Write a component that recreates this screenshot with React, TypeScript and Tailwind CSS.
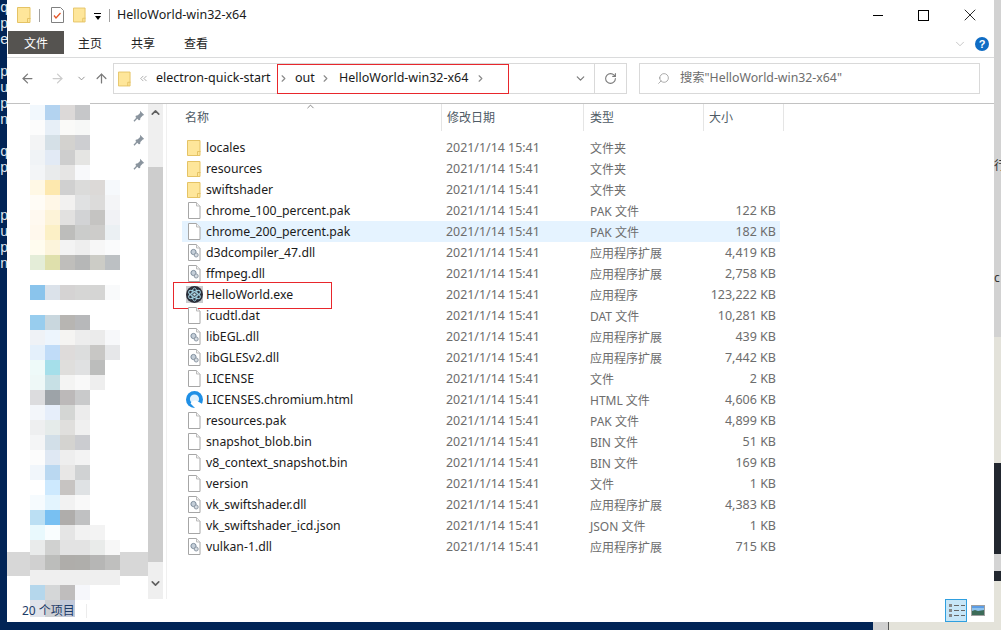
import { ArrowLeft, ArrowRight, ArrowUp, ChevronDown, ChevronRight, ChevronUp, ChevronsLeft, RotateCw, Search, X } from 'lucide-react';

const font = "font-['Noto_Sans','Noto_Sans_CJK_SC',sans-serif]";

type FileRow = { name: string; type: string; size?: string; icon: 'folder' | 'file' | 'dll' | 'exe' | 'html'; hover?: boolean };

const files: FileRow[] = [
  { name: 'locales', type: '文件夹', icon: 'folder' },
  { name: 'resources', type: '文件夹', icon: 'folder' },
  { name: 'swiftshader', type: '文件夹', icon: 'folder' },
  { name: 'chrome_100_percent.pak', type: 'PAK 文件', size: '122 KB', icon: 'file' },
  { name: 'chrome_200_percent.pak', type: 'PAK 文件', size: '182 KB', icon: 'file', hover: true },
  { name: 'd3dcompiler_47.dll', type: '应用程序扩展', size: '4,419 KB', icon: 'dll' },
  { name: 'ffmpeg.dll', type: '应用程序扩展', size: '2,758 KB', icon: 'dll' },
  { name: 'HelloWorld.exe', type: '应用程序', size: '123,222 KB', icon: 'exe' },
  { name: 'icudtl.dat', type: 'DAT 文件', size: '10,281 KB', icon: 'file' },
  { name: 'libEGL.dll', type: '应用程序扩展', size: '439 KB', icon: 'dll' },
  { name: 'libGLESv2.dll', type: '应用程序扩展', size: '7,442 KB', icon: 'dll' },
  { name: 'LICENSE', type: '文件', size: '2 KB', icon: 'file' },
  { name: 'LICENSES.chromium.html', type: 'HTML 文件', size: '4,606 KB', icon: 'html' },
  { name: 'resources.pak', type: 'PAK 文件', size: '4,899 KB', icon: 'file' },
  { name: 'snapshot_blob.bin', type: 'BIN 文件', size: '51 KB', icon: 'file' },
  { name: 'v8_context_snapshot.bin', type: 'BIN 文件', size: '169 KB', icon: 'file' },
  { name: 'version', type: '文件', size: '1 KB', icon: 'file' },
  { name: 'vk_swiftshader.dll', type: '应用程序扩展', size: '4,383 KB', icon: 'dll' },
  { name: 'vk_swiftshader_icd.json', type: 'JSON 文件', size: '1 KB', icon: 'file' },
  { name: 'vulkan-1.dll', type: '应用程序扩展', size: '715 KB', icon: 'dll' },
];

// blurred-out quick access entries, one row of blocks per line
const blurRows: { cls: string; cells: string[] }[] = [
  { cls: 'h-[15px]', cells: ['bg-[#f2f8fd]', 'bg-[#b3d3f0]', 'bg-[#dcd9d8]', 'bg-[#c6c7c9]'] },
  { cls: 'h-[15px]', cells: ['bg-[#fcfcfc]', 'bg-[#e7eff7]', 'bg-[#fafaf8]', 'bg-[#f7f8f7]'] },
  { cls: 'h-[15px]', cells: ['bg-[#f3f4f5]', 'bg-[#d5e0e7]', 'bg-[#d3d2cf]', 'bg-[#cdced1]'] },
  { cls: 'h-[15px]', cells: ['bg-[#f0f3f6]', 'bg-[#e2eaf5]', 'bg-[#cecece]', 'bg-[#e5e5e3]'] },
  { cls: 'h-[15px]', cells: ['bg-[#f3f5f7]', 'bg-[#e9ebec]', 'bg-[#e6e5e4]', 'bg-[#f8f9fb]'] },
  { cls: 'h-[15px]', cells: ['bg-[#fff8e5]', 'bg-[#fde8ae]', 'bg-[#d0d0d0]', 'bg-[#dbdbda]', 'bg-[#dcd9d7]', 'bg-[#f6f9fc]'] },
  { cls: 'h-[15px]', cells: ['bg-[#fffcf6]', 'bg-[#fff7e7]', 'bg-[#f2f1f0]', 'bg-[#e0e1e2]', 'bg-[#dcdbda]', 'bg-[#f4f5f7]'] },
  { cls: 'h-[15px]', cells: ['bg-[#fff9f0]', 'bg-[#fdf3d8]', 'bg-[#e2e1e0]', 'bg-[#d2d3d5]', 'bg-[#c5c4c2]', 'bg-[#f1f2f5]'] },
  { cls: 'h-[15px]', cells: ['bg-[#fff8ed]', 'bg-[#fcf0c6]', 'bg-[#bdbdbb]', 'bg-[#cbcccb]', 'bg-[#cdccca]', 'bg-[#ebf0f3]'] },
  { cls: 'h-[15px]', cells: ['bg-[#fffcef]', 'bg-[#fcf4db]', 'bg-[#f3f3f3]', 'bg-[#eeeeee]', 'bg-[#f7f7f7]', 'bg-[#fafbfc]'] },
  { cls: 'h-[15px]', cells: ['bg-[#e4edd8]', 'bg-[#dfe0ac]', 'bg-[#bfbebb]', 'bg-[#b6b7b7]', 'bg-[#ccccc6]', 'bg-[#bcc0c3]'] },
  { cls: 'h-[15px]', cells: [] },
  { cls: 'h-[15px]', cells: ['bg-[#8ac4ec]', 'bg-[#dbe2ea]', 'bg-[#d5d3d3]', 'bg-[#d6d6d5]', 'bg-[#d5d5d4]', 'bg-[#f9fafb]'] },
  { cls: 'h-[15px]', cells: [] },
  { cls: 'h-[15px]', cells: ['bg-[#98cdee]', 'bg-[#c9d7de]', 'bg-[#b7b5b2]', 'bg-[#b7b8ba]'] },
  { cls: 'h-[15px]', cells: ['bg-[#eff2f6]', 'bg-[#edf5fd]', 'bg-[#f5f4f2]', 'bg-[#ededed]', 'bg-[#ebebeb]', 'bg-[#f7f8fa]'] },
  { cls: 'h-[15px]', cells: ['bg-[#e4f0fb]', 'bg-[#c0dcf8]', 'bg-[#dedbda]', 'bg-[#dcdddd]', 'bg-[#c8c7c5]', 'bg-[#e6e7e9]'] },
  { cls: 'h-[15px]', cells: ['bg-[#eefaf9]', 'bg-[#a5dfea]', 'bg-[#dfdedc]', 'bg-[#e0e1e2]', 'bg-[#bcbdbc]'] },
  { cls: 'h-[15px]', cells: ['bg-[#eef8f7]', 'bg-[#c7e0e5]', 'bg-[#f4f4f3]', 'bg-[#f9f9f9]', 'bg-[#eeeeee]'] },
  { cls: 'h-[15px]', cells: ['bg-[#dcdcde]', 'bg-[#9da3a8]', 'bg-[#bcb9b9]', 'bg-[#c9cacb]'] },
  { cls: 'h-[15px]', cells: ['bg-[#f3f6fa]', 'bg-[#e6eefa]', 'bg-[#d4d6d4]', 'bg-[#ececec]'] },
  { cls: 'h-[15px]', cells: ['bg-[#eeeff0]', 'bg-[#e5ebea]', 'bg-[#e0dfdd]', 'bg-[#f0f0f0]'] },
  { cls: 'h-[15px]', cells: ['bg-[#f4f5f6]', 'bg-[#d2dfe8]', 'bg-[#d4d3d0]', 'bg-[#cbccd0]'] },
  { cls: 'h-[15px]', cells: ['bg-[#fcfcfc]', 'bg-[#dfe8f3]', 'bg-[#eeeeee]', 'bg-[#f3f3f3]'] },
  { cls: 'h-[15px]', cells: ['bg-[#f1f6fb]', 'bg-[#bad8f1]', 'bg-[#e8e7e6]', 'bg-[#d0d2d3]'] },
  { cls: 'h-[15px]', cells: ['bg-[#ffffff]', 'bg-[#cde9fe]', 'bg-[#c7c4c2]', 'bg-[#dfe2e4]'] },
  { cls: 'h-[15px]', cells: ['bg-[#f6fbfe]', 'bg-[#e3f4fe]', 'bg-[#f2f2f2]', 'bg-[#f9f9f9]'] },
  { cls: 'h-[15px]', cells: ['bg-[#bbdff3]', 'bg-[#78c0f2]', 'bg-[#afadab]', 'bg-[#c0c1c2]'] },
  { cls: 'h-[15px]', cells: ['bg-[#e9f9fd]', 'bg-[#f9fdfe]', 'bg-[#e5e5e5]', 'bg-[#f2f2f2]', 'bg-[#f3f3f3]'] },
  { cls: 'h-[12px]', cells: ['bg-[#e9ebeb]', 'bg-[#d0d1d0]', 'bg-[#e3e3e3]', 'bg-[#e3e3e3]', 'bg-[#e9ebea]', 'bg-[#f7f7f7]'] },
];

const tailRows: { cls: string; cells: string[] }[] = [
  { cls: 'h-[9px]', cells: ['bg-[#efefef]', 'bg-[#efefef]', 'bg-[#efefef]', 'bg-[#efefef]', 'bg-[#efefef]', 'bg-[#efefef]'] },
  { cls: 'h-[15px]', cells: ['bg-[#b5d7ec]', 'bg-[#d5d7d8]', 'bg-[#bfbdbd]', 'bg-[#f6f7fb]'] },
  { cls: 'h-[17px]', cells: ['bg-[#e0e3ea]', 'bg-[#cdd0d3]', 'bg-[#c2c9d9]'] },
];

const termLines = ['q', 'p', 'e', '', 'p', 'u', 'p', 'n', '', 'q', 'p', '', '', 'p', 'u', 'p', 'n'];

function Folder({ cls = 'w-[14px] h-[16px]' }: { cls?: string }) {
  return (
    <svg viewBox="0 0 14 16" className={cls}>
      <path d="M.5.5h12.5v15H.5z" fill="#fee69a" stroke="#e5c365" />
      <path d="M10.5 15.5v-4h3" fill="none" stroke="#e5c365" />
    </svg>
  );
}

function FileIcon({ gear }: { gear?: boolean }) {
  return (
    <svg viewBox="0 0 14 17" className="w-[14px] h-[17px]">
      <path d="M1.5.5h8l3.5 3.5v12.5H1.5z" fill="#fff" stroke="#a6a6a6" />
      <path d="M9.5.5v3.5H13" fill="#f3f3f3" stroke="#bcbcbc" />
      {gear && (
        <g>
          <circle cx="6.5" cy="8" r="2.6" fill="#c4ced8" stroke="#7e8d9c" strokeWidth="1" />
          <circle cx="9.2" cy="11" r="2" fill="#d5dbe1" stroke="#8f9aa6" strokeWidth="1" />
        </g>
      )}
    </svg>
  );
}

function ElectronIcon() {
  return (
    <svg viewBox="0 0 17 17" className="w-[17px] h-[17px]">
      <rect width="17" height="17" fill="#c9cbcd" />
      <circle cx="8.5" cy="8.5" r="8.5" fill="#2b2f3a" />
      <g fill="none" stroke="#a4d4e4" strokeWidth="1">
        <ellipse cx="8.5" cy="8.5" rx="6.5" ry="2.6" transform="rotate(30 8.5 8.5)" />
        <ellipse cx="8.5" cy="8.5" rx="6.5" ry="2.6" transform="rotate(90 8.5 8.5)" />
        <ellipse cx="8.5" cy="8.5" rx="6.5" ry="2.6" transform="rotate(150 8.5 8.5)" />
      </g>
      <circle cx="8.5" cy="8.5" r="1.3" fill="#c8e8f2" />
    </svg>
  );
}

function BrowserIcon() {
  return (
    <svg viewBox="0 0 17 17" className="w-[17px] h-[17px]">
      <circle cx="8.5" cy="8.5" r="8.5" fill="#1f8fe5" />
      <circle cx="8.5" cy="8" r="4.6" fill="#dff1fd" />
      <path d="M4.500 12.500c1.500-2.500 4-3.500 6.500-2.500 1.500.6 4 2.500 6 3.500v3.500H9z" fill="#fff" />
    </svg>
  );
}

function RowIcon({ kind }: { kind: FileRow['icon'] }) {
  if (kind === 'folder') return <Folder />;
  if (kind === 'exe') return <ElectronIcon />;
  if (kind === 'html') return <BrowserIcon />;
  return <FileIcon gear={kind === 'dll'} />;
}

function Pin() {
  return (
    <svg viewBox="0 0 12 12" className="w-[12px] h-[12px]">
      <path d="M7 .8l4.200 4.200-1.400.6-2.400 2.400-.3 2-1.300.2L2.500 6.900l.3-1.200 2-.4 2.300-2.400z" fill="#8a949e" />
      <path d="M4 8l-3 3.300" stroke="#8a949e" strokeWidth="1.300" />
    </svg>
  );
}

function BlurRow({ cls, cells }: { cls: string; cells: string[] }) {
  return (
    <div className={`flex pl-[23px] ${cls}`}>
      {cells.map((c, i) => (
        <div key={i} className={`w-[15px] ${c}`} />
      ))}
    </div>
  );
}

function Sidebar() {
  return (
    <div className="w-[141px] relative">
      <div className="h-[1px] w-[60px] ml-[23px] -mt-[1px] bg-white" />
      <div className="h-[1px]" />
      {blurRows.map((r, i) => (
        <BlurRow key={i} cls={r.cls} cells={r.cells} />
      ))}
      <div className="flex h-[24px]">
        <div className="w-[23px] bg-[#d7d7d7]" />
        <div className="w-[90px] flex flex-col">
          <div className="h-[3px] flex">
            <div className="w-[15px] bg-[#e9ebeb]" />
            <div className="w-[15px] bg-[#d0d1d0]" />
            <div className="w-[30px] bg-[#e3e3e3]" />
            <div className="w-[15px] bg-[#e9ebea]" />
            <div className="w-[15px] bg-[#f7f7f7]" />
          </div>
          <div className="h-[15px] flex">
            <div className="w-[15px] bg-[#d0d0d0]" />
            <div className="w-[15px] bg-[#bcbdbb]" />
            <div className="w-[15px] bg-[#afadaa]" />
            <div className="w-[15px] bg-[#afaeab]" />
            <div className="w-[15px] bg-[#b6b6b5]" />
            <div className="w-[15px] bg-[#bfbfbe]" />
          </div>
          <div className="h-[6px] bg-[#efefef]" />
        </div>
        <div className="w-[28px] bg-[#d7d7d7]" />
      </div>
      {tailRows.map((r, i) => (
        <BlurRow key={i} cls={r.cls} cells={r.cells} />
      ))}
      {/* pins sit on top of the blurred list */}
      <div className="absolute left-[126px] top-[6px] flex flex-col gap-[12px]">
        <Pin />
        <Pin />
        <Pin />
      </div>
    </div>
  );
}

function Scrollbar() {
  return (
    <div className="w-[15px] h-[495px] flex flex-col bg-[#efefef] mr-[3px] relative">
      <div className="h-[16px] flex items-center justify-center">
        <ChevronUp size={13} strokeWidth={3} className="text-[#606060]" />
      </div>
      <div className="h-[47px]" />
      <div className="flex-1 bg-[#cdcdcd]" />
      <div className="h-[37px] flex items-end justify-center pb-[9px]">
        <ChevronDown size={13} strokeWidth={3} className="text-[#606060]" />
      </div>
    </div>
  );
}

function FileList() {
  return (
    <div className="flex-1 border-l border-[#f0f0f0] flex flex-col">
      <div className="h-[27px] flex text-[12px] text-[#4f5b66] relative">
        <div className="w-[274px] pl-[18px] pt-[5px]">名称</div>
        <div className="w-[142px] pl-[5px] pt-[5px] border-l border-[#e5e5e5]">修改日期</div>
        <div className="w-[120px] pl-[6px] pt-[5px] border-l border-[#e5e5e5]">类型</div>
        <div className="w-[81px] pl-[5px] pt-[5px] border-l border-r border-[#e5e5e5]">大小</div>
        <ChevronUp size={11} strokeWidth={1.5} className="absolute left-[138px] -top-[3px] text-[#555]" />
      </div>
      <div className="pt-[6px]">
        {files.map((f) => (
          <div
            key={f.name}
            className={`h-[21px] flex items-center ml-[15px] w-[598px] relative ${f.hover ? 'bg-[#e5f3ff]' : ''}`}
          >
            <div className="w-[24px] flex justify-center shrink-0">
              <RowIcon kind={f.icon} />
            </div>
            <div className="w-[240px] pt-[2px] text-[12.250px] text-[#1a1a1a] whitespace-nowrap">{f.name}</div>
            <div className="w-[144px] pt-[2px] text-[12.400px] text-[#6d6d6d] whitespace-nowrap">2021/1/14 15:41</div>
            <div className="w-[100px] pt-[2px] text-[12px] text-[#6d6d6d] whitespace-nowrap">{f.type}</div>
            <div className="w-[86px] pt-[2px] text-right text-[12.500px] text-[#6d6d6d] whitespace-nowrap">{f.size}</div>
            {f.icon === 'exe' && (
              <div className="absolute -left-[9px] -top-[2px] w-[159px] h-[27px] border border-[#e8272c]" />
            )}
          </div>
        ))}
      </div>
    </div>
  );
}

export default function App() {
  return (
    <div className={`w-[1001px] h-[630px] overflow-hidden flex flex-col ${font}`}>
      <div className="h-[622px] flex">
        {/* terminal behind the window, left side */}
        <div className="w-[7px] bg-[#012456] overflow-hidden font-['Liberation_Mono',monospace] text-[14px] leading-[16px] text-[#dfe6ee]">
          {termLines.map((l, i) => (
            <div key={i} className="h-[16px]">
              {l}
            </div>
          ))}
        </div>

        <div className="w-[987px] bg-white flex flex-col">
          {/* title bar */}
          <div className="h-[30px] flex items-center shrink-0">
            <div className="ml-[10px]">
              <Folder cls="w-[14px] h-[16px]" />
            </div>
            <div className="ml-[8px] w-px h-[13px] bg-[#a0a0a0]" />
            <svg viewBox="0 0 13 16" className="ml-[11px] w-[13px] h-[16px]">
              <path d="M.5.5h9l3 3v12H.5z" fill="#fff" stroke="#808080" />
              <path d="M3 8.500l2 2.500 4.500-5" fill="none" stroke="#e2572a" strokeWidth="1.300" />
            </svg>
            <div className="ml-[9px]">
              <Folder cls="w-[13px] h-[16px]" />
            </div>
            <div className="ml-[8px] w-[7px] flex flex-col items-center gap-[2px] mt-[3px]">
              <div className="w-[7px] h-px bg-black" />
              <div className="w-0 h-0 border-l-[3.500px] border-r-[3.500px] border-t-[4px] border-l-transparent border-r-transparent border-t-black" />
            </div>
            <div className="ml-[8px] w-px h-[13px] bg-[#a0a0a0]" />
            <div className="ml-[7px] text-[12.500px] text-[#1a1a1a] whitespace-nowrap">HelloWorld-win32-x64</div>
            <div className="flex-1" />
            <div className="w-[10px] h-px bg-black mr-[35px]" />
            <div className="w-[11px] h-[11px] border border-black mr-[31px]" />
            <X size={20} strokeWidth={1} className="text-black mr-[14px]" />
          </div>

          {/* ribbon tabs */}
          <div className="h-[28px] flex shrink-0 border-b border-[#dadbdc] text-[12px]">
            <div className="ml-[1px] mt-[1px] w-[56px] h-[23px] bg-[#555350] text-white flex items-center justify-center pt-[2px]">文件</div>
            <div className="ml-[14px] mt-[1px] h-[23px] flex items-center text-[#222] pt-[2px]">主页</div>
            <div className="ml-[29px] mt-[1px] h-[23px] flex items-center text-[#222] pt-[2px]">共享</div>
            <div className="ml-[29px] mt-[1px] h-[23px] flex items-center text-[#222] pt-[2px]">查看</div>
            <div className="flex-1" />
            <ChevronDown size={14} strokeWidth={1.2} className="text-[#b0b0b0] mt-[7px] mr-[8px]" />
            <div className="w-[14px] h-[14px] mt-[7px] mr-[5px] rounded-full bg-[#0f6cc4] text-white text-[11px] font-bold leading-[14px] text-center font-['Liberation_Sans',sans-serif]">?</div>
          </div>

          {/* navigation row */}
          <div className="h-[46px] flex items-center shrink-0 border-b border-[#c2c2c2] pb-[4px]">
            <ArrowLeft size={15} strokeWidth={2} className="ml-[13px] text-[#7a7a7a]" />
            <ArrowRight size={15} strokeWidth={2} className="ml-[15px] text-[#cccccc]" />
            <ChevronDown size={11} strokeWidth={2} className="ml-[11px] text-[#8a8a8a]" />
            <ArrowUp size={15} strokeWidth={2} className="ml-[7px] text-[#7a7a7a]" />
            <div className="ml-[4px] w-[514px] h-[31px] border border-[#d9d9d9] flex items-center text-[12.500px] text-[#1a1a1a] whitespace-nowrap relative">
              <div className="ml-[4px]">
                <Folder cls="w-[13px] h-[16px]" />
              </div>
              <ChevronsLeft size={11} strokeWidth={1.5} className="ml-[7px] text-[#8a8a8a]" />
              <div className="ml-[7px] w-[114px]">electron-quick-start</div>
              <ChevronRight size={11} strokeWidth={2.5} className="ml-[8px] text-[#8a8a8a]" />
              <div className="ml-[6px] w-[19px]">out</div>
              <ChevronRight size={11} strokeWidth={2.5} className="ml-[6px] text-[#8a8a8a]" />
              <div className="ml-[8px] w-[129px]">HelloWorld-win32-x64</div>
              <ChevronRight size={11} strokeWidth={2.5} className="ml-[7px] text-[#8a8a8a]" />
              <div className="absolute left-[163px] top-0 w-[232px] h-[30px] border border-[#e8272c]" />
              <div className="flex-1" />
              <ChevronDown size={13} strokeWidth={2.2} className="text-[#7a7a7a] mr-[7px]" />
              <div className="w-px h-full bg-[#d9d9d9]" />
              <div className="w-[31px] flex justify-center">
                <RotateCw size={13} strokeWidth={2} className="text-[#7a7a7a]" />
              </div>
            </div>
            <div className="ml-[12px] w-[341px] h-[31px] border border-[#d9d9d9] flex items-center text-[12.300px] text-[#6d6d6d] whitespace-nowrap">
              <Search size={13} strokeWidth={1.3} className="ml-[17px] text-[#8a8a8a] -scale-x-100" />
              <div className="ml-[10px]">搜索"HelloWorld-win32-x64"</div>
            </div>
          </div>

          {/* body */}
          <div className="flex-1 min-h-0 flex">
            <Sidebar />
            <Scrollbar />
            <FileList />
          </div>

          {/* status bar */}
          <div className="h-[23px] shrink-0 flex items-center relative text-[12px] text-[#1d3c68]">
            <div className="ml-[15px] w-[64px] pt-[1px]">20 个项目</div>
            <div className="w-px h-[14px] bg-[#ececec]" />
            <div className="flex-1" />
            <div className="w-[22px] h-[23px] bg-[#c7e6f7] border border-[#2f9fdf] flex flex-col justify-center gap-[2px] pl-[3px]">
              {[0, 1, 2].map((n) => (
                <div key={n} className="flex items-center gap-[1px]">
                  <div className="w-[3px] h-[3px] bg-[#888]" />
                  <div className="w-[5px] h-px bg-[#666] ml-[1px]" />
                  <div className="w-[4px] h-px bg-[#666] ml-[1px]" />
                </div>
              ))}
            </div>
            <svg viewBox="0 0 14 11" className="ml-[4px] mr-[9px] w-[14px] h-[11px]">
              <rect x=".5" y=".5" width="13" height="10" fill="#8fc3ee" stroke="#a0a0a0" />
              <path d="M1 6l3-1 3 1 6-1v5H1z" fill="#3d6b58" />
              <rect x="1" y="1" width="12" height="2" fill="#5c9de5" />
            </svg>
          </div>
        </div>

        {/* what shows behind the window, right side */}
        <div className="w-[7px] flex flex-col">
          <div className="h-[337px] bg-[#d2d2d2] flex flex-col text-[12px] leading-[12px] text-[#333] overflow-hidden">
            <div className="mt-[160px]">行</div>
            <div className="mt-[100px]">c</div>
          </div>
          <div className="h-[126px] bg-[#e3e2da]" />
          <div className="h-[91px] bg-[#22272f]" />
          <div className="h-[17px] bg-[#d4d4d4]" />
          <div className="h-[10px] bg-[#22272f]" />
          <div className="flex-1 bg-[#e4e3da]" />
        </div>
      </div>
      <div className="h-[8px] flex">
        <div className="w-[873px] bg-[#012456]" />
        <div className="w-[16px] bg-[#d0d0d0] border-r border-[#555]" />
        <div className="flex-1 bg-[#e4e3da]" />
      </div>
    </div>
  );
}
